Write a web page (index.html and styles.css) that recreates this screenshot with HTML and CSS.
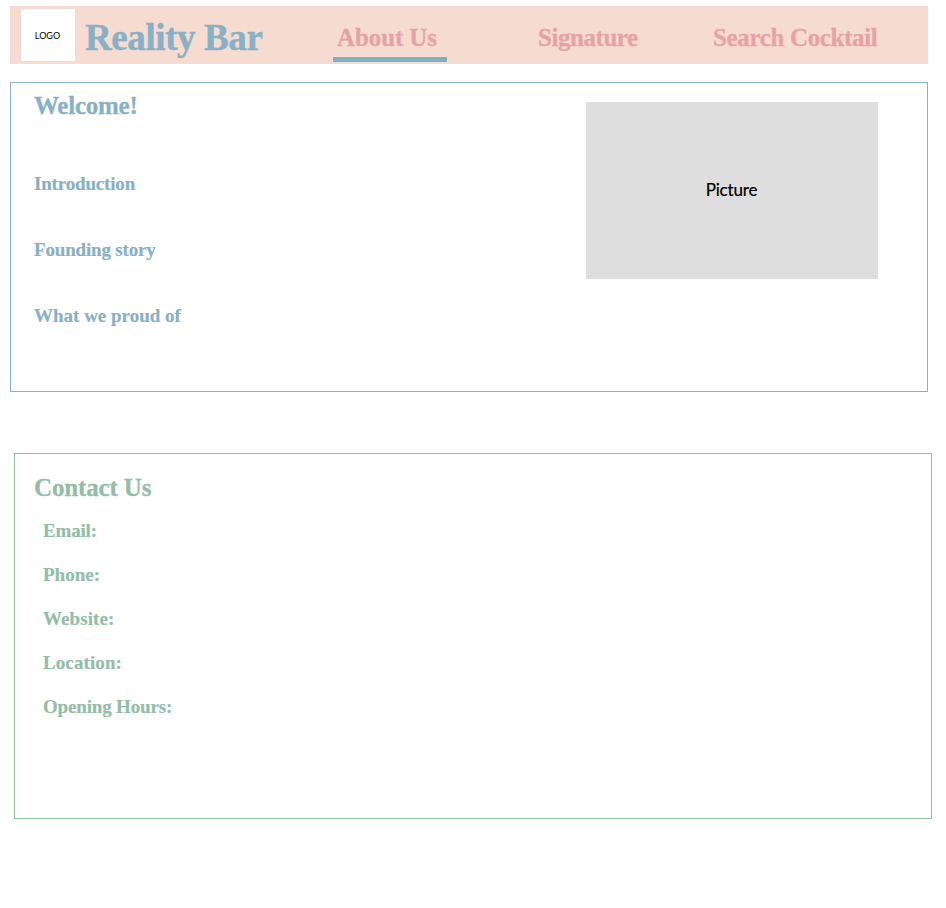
FILE: index.html
```html
<!DOCTYPE html>
<html lang="en">
<head>
<meta charset="utf-8">
<title>Reality Bar</title>
<link rel="stylesheet" href="styles.css">
</head>
<body>
<header class="topbar">
  <div class="logo">LOGO</div>
  <h1 class="brand">Reality Bar</h1>
  <nav class="nav">
    <a class="nav-item about active">About Us</a>
    <a class="nav-item signature">Signature</a>
    <a class="nav-item search">Search Cocktail</a>
  </nav>
</header>
<main>
  <section class="panel welcome">
    <div>
      <h2 class="title welcome-title">Welcome!</h2>
      <ul class="topics">
        <li class="tight">Introduction</li>
        <li class="tight">Founding story</li>
        <li>What we proud of</li>
      </ul>
    </div>
    <div class="picture">Picture</div>
  </section>
  <section class="panel contact">
    <h2 class="title contact-title">Contact Us</h2>
    <ul class="details">
      <li class="tight">Email:</li>
      <li>Phone:</li>
      <li class="loose">Website:</li>
      <li class="loose">Location:</li>
      <li class="tight">Opening Hours:</li>
    </ul>
  </section>
</main>
</body>
</html>
```
FILE: styles.css
```css
* { box-sizing: border-box; }
body {
  margin: 0;
  padding: 6px 14px 0 10px;
  background: #fff;
  font-family: "Liberation Serif", "Times New Roman", serif;
  font-weight: bold;
}
h1, h2, ul { margin: 0; padding: 0; }
ul { list-style: none; }
.topbar {
  display: flex;
  width: 918px;
  height: 58px;
  padding: 3px 0 0 11px;
  background: #f6dbd0;
}
.logo {
  display: flex;
  align-items: center;
  justify-content: center;
  width: 54px;
  height: 52px;
  padding-right: 1px;
  background: #fff;
  color: #000;
  font: 9px Lato, sans-serif;
}
.brand {
  width: 247.5px;
  margin-left: 10px;
  color: #88b0c6;
  font-size: 37px;
  line-height: 58px;
  letter-spacing: -0.4px;
  white-space: nowrap;
  -webkit-text-stroke: 0.4px;
}
.nav { display: flex; }
.nav-item {
  height: 53px;
  color: #e7a2a8;
  font-size: 25px;
  line-height: 57px;
  white-space: nowrap;
  -webkit-text-stroke: 0.3px;
}
.about { width: 114.5px; padding-left: 4.5px; letter-spacing: -0.1px; }
.active { border-bottom: 5px solid #84aec5; }
.signature { width: 175px; margin-left: 91px; letter-spacing: -0.45px; }
.search { letter-spacing: -0.35px; }
.panel { width: 918px; border: 1px solid; }
.welcome {
  display: flex;
  justify-content: space-between;
  height: 310px;
  margin-top: 18px;
  padding: 7px 49px 0 23px;
  color: #88b0c6;
}
.title { font-size: 25px; line-height: 31px; -webkit-text-stroke: 0.3px; }
.welcome-title { letter-spacing: -0.25px; }
.topics { margin-top: 30px; }
.topics li { height: 66px; font-size: 19px; line-height: 66px; -webkit-text-stroke: 0.2px; }
.topics .tight, .details .tight { letter-spacing: -0.17px; }
.picture {
  display: flex;
  align-items: center;
  justify-content: center;
  width: 292px;
  height: 177px;
  margin-top: 12px;
  padding: 0 1px 2px 0;
  background: #dedede;
  color: #000;
  font: 17px Lato, sans-serif;
  letter-spacing: -0.15px;
  -webkit-text-stroke: 0.2px;
}
.contact {
  height: 366px;
  margin: 61px 0 0 4px;
  padding: 18px 0 0 19px;
  color: #93bda7;
}
.contact-title { letter-spacing: -0.15px; }
.details { margin: 6px 0 0 9px; }
.details li { height: 44px; font-size: 19px; line-height: 44px; -webkit-text-stroke: 0.2px; }
.details .loose { letter-spacing: 0.1px; }
```
